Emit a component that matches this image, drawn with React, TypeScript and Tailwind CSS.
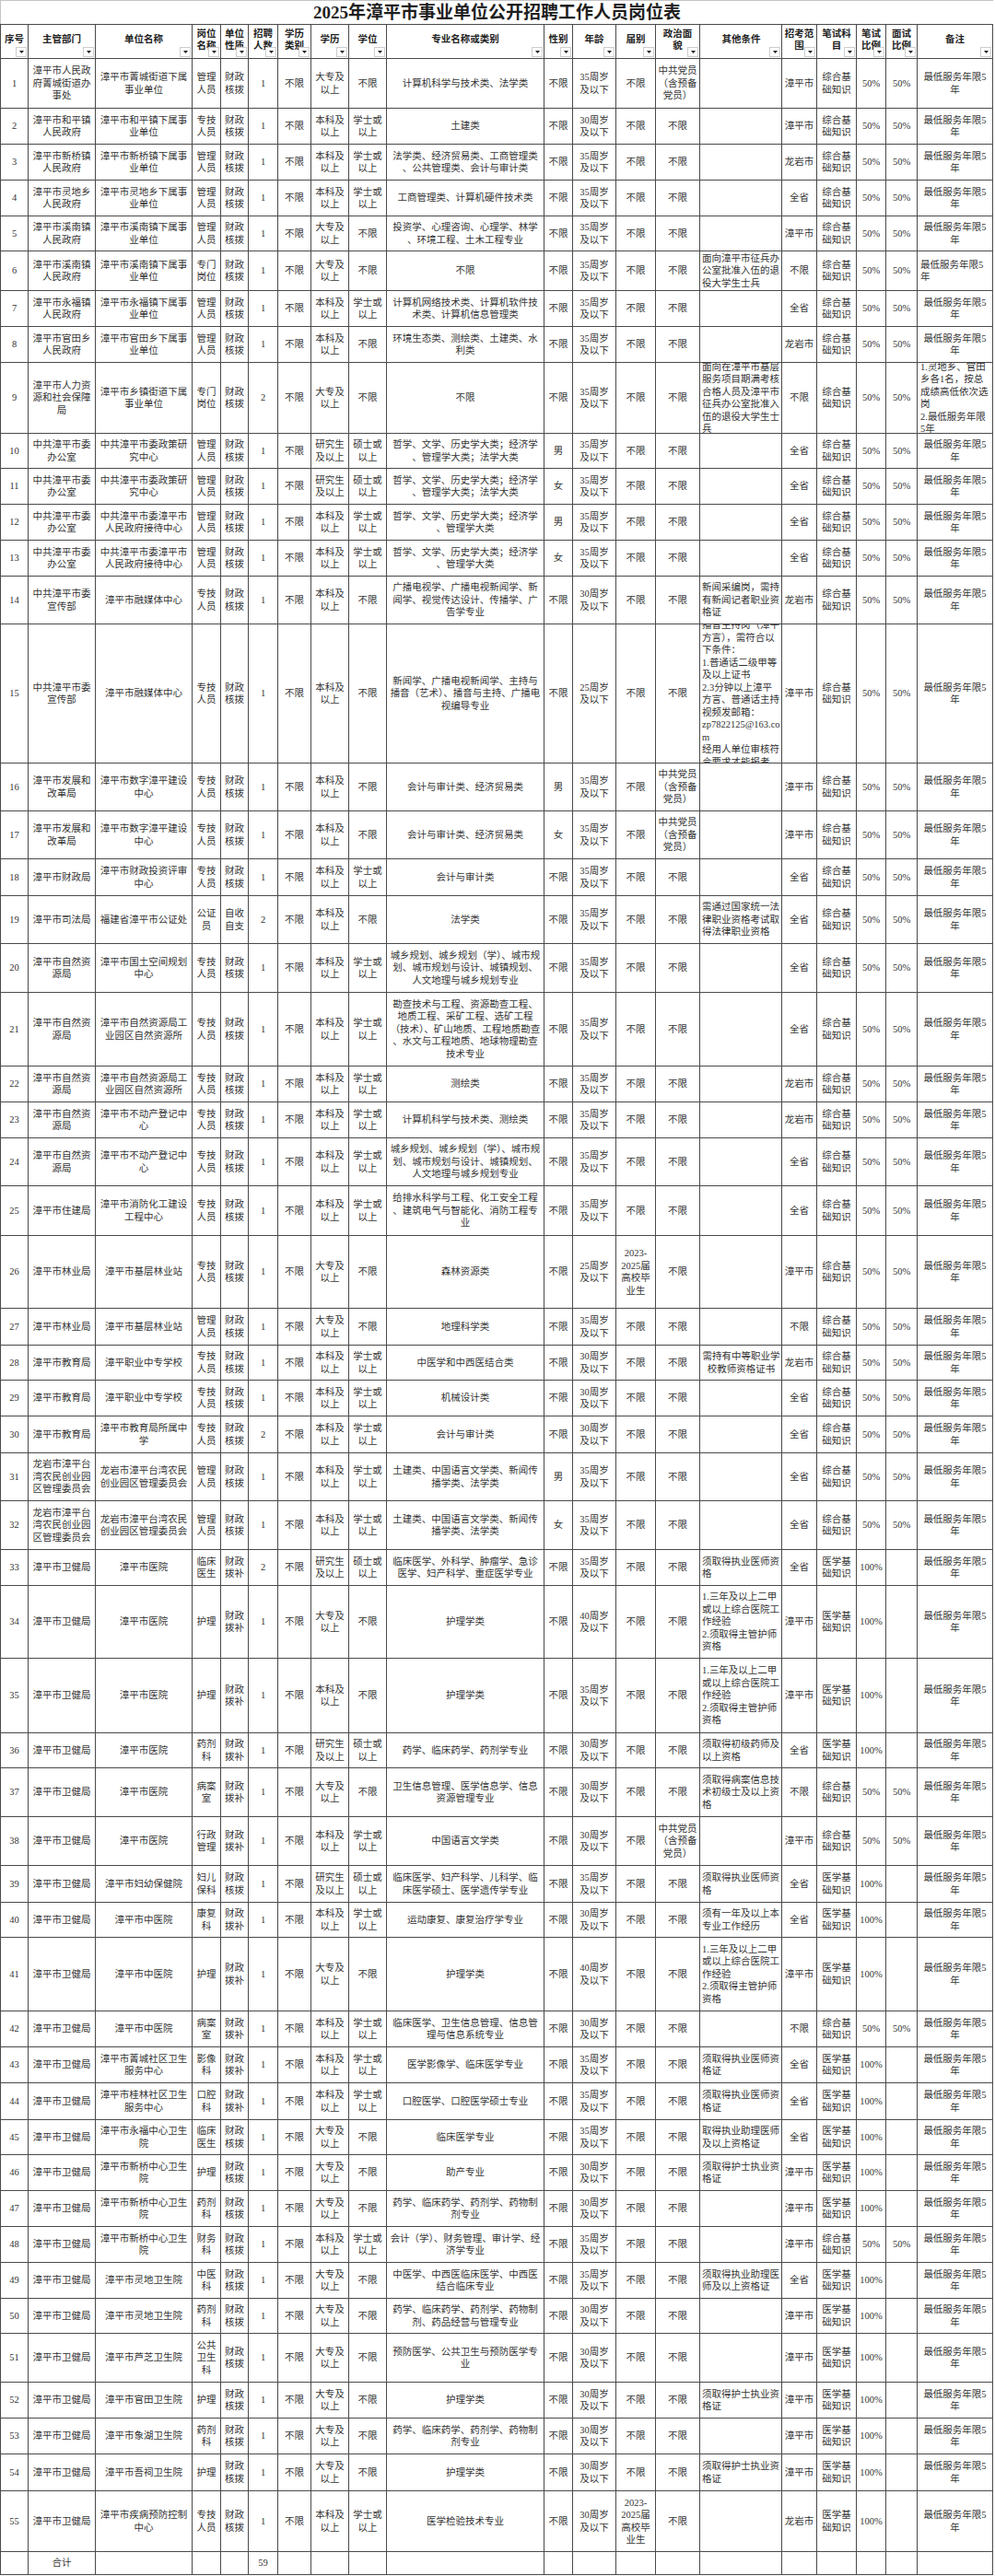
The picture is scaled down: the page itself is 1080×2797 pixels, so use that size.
import clsx from "clsx";

type Row = {
  h: string;
  v: string[];
  oc?: boolean; // other-conditions centred
  nl?: boolean; // note left aligned
};

const GL = "管理人员";
const ZJ = "专技人员";
const HB = "财政核拨";
const BB = "财政拨补";
const DZ = "大专及以上";
const BK = "本科及以上";
const YJ = "研究生及以上";
const XS = "学士或以上";
const SS = "硕士或以上";
const BX = "不限";
const DY = "中共党员\n（含预备\n党员）";
const ZH = "综合基础知识";
const YX = "医学基础知识";
const P = "50%";
const NOTE = "最低服务年限5年";
const GRAD = "2023-\n2025届\n高校毕\n业生";
const WJ = "漳平市卫健局";
const LY = "龙岩市漳平台湾农民创业园区管理委员会";
const URBAN =
  "城乡规划、城乡规划（学）、城市规划、城市规划与设计、城镇规划、人文地理与城乡规划专业";
const NURSE = "1.三年及以上二甲或以上综合医院工作经验\n2.须取得主管护师资格";

const COLS = [
  { head: "序号", cls: "px-[1px]" },
  { head: "主管部门", cls: "px-[1px]" },
  { head: "单位名称", cls: "px-[1px]" },
  { head: "岗位\n名称", cls: "px-[1px]" },
  { head: "单位\n性质", cls: "px-[1px]" },
  { head: "招聘\n人数", cls: "px-[1px]" },
  { head: "学历\n类别", cls: "px-[1px]" },
  { head: "学历", cls: "px-[1px]" },
  { head: "学位", cls: "px-[1px]" },
  { head: "专业名称或类别", cls: "px-[3px] [line-break:anywhere]" },
  { head: "性别", cls: "px-[1px]" },
  { head: "年龄", cls: "px-[1px]" },
  { head: "届别", cls: "px-[1px]" },
  { head: "政治面\n貌", cls: "px-[1px]" },
  { head: "其他条件", cls: "pl-[2px] pr-[1px] break-all" },
  { head: "招考范\n围", cls: "px-[1px]" },
  { head: "笔试科\n目", cls: "px-[1px]" },
  { head: "笔试\n比例", cls: "px-[1px]" },
  { head: "面试\n比例", cls: "px-[1px]" },
  { head: "备注", cls: "px-[3px]" },
];

// dept, unit, post, fund, count, edu, degree, major, sex, age, grad, politics, other, scope, subject, written, interview, note
const ROWS: Row[] = [
  { h: "h-[54px]", v: ["漳平市人民政府菁城街道办事处", "漳平市菁城街道下属事业单位", GL, HB, "1", DZ, BX, "计算机科学与技术类、法学类", BX, "35", BX, DY, "", "漳平市", ZH, P, P, NOTE] },
  { h: "h-[39px]", v: ["漳平市和平镇人民政府", "漳平市和平镇下属事业单位", ZJ, HB, "1", BK, XS, "土建类", BX, "30", BX, BX, "", "漳平市", ZH, P, P, NOTE] },
  { h: "h-[39px]", v: ["漳平市新桥镇人民政府", "漳平市新桥镇下属事业单位", GL, HB, "1", BK, XS, "法学类、经济贸易类、工商管理类、公共管理类、会计与审计类", BX, "35", BX, BX, "", "龙岩市", ZH, P, P, NOTE] },
  { h: "h-[39px]", v: ["漳平市灵地乡人民政府", "漳平市灵地乡下属事业单位", GL, HB, "1", BK, XS, "工商管理类、计算机硬件技术类", BX, "35", BX, BX, "", "全省", ZH, P, P, NOTE] },
  { h: "h-[38px]", v: ["漳平市溪南镇人民政府", "漳平市溪南镇下属事业单位", GL, HB, "1", DZ, BX, "投资学、心理咨询、心理学、林学、环境工程、土木工程专业", BX, "35", BX, BX, "", "漳平市", ZH, P, P, NOTE] },
  { h: "h-[43px]", nl: true, v: ["漳平市溪南镇人民政府", "漳平市溪南镇下属事业单位", "专门岗位", HB, "1", DZ, BX, BX, BX, "35", BX, BX, "面向漳平市征兵办公室批准入伍的退役大学生士兵", BX, ZH, P, P, NOTE] },
  { h: "h-[39px]", v: ["漳平市永福镇人民政府", "漳平市永福镇下属事业单位", GL, HB, "1", BK, XS, "计算机网络技术类、计算机软件技术类、计算机信息管理类", BX, "35", BX, BX, "", "全省", ZH, P, P, NOTE] },
  { h: "h-[39px]", v: ["漳平市官田乡人民政府", "漳平市官田乡下属事业单位", GL, HB, "1", BK, BX, "环境生态类、测绘类、土建类、水利类", BX, "35", BX, BX, "", "龙岩市", ZH, P, P, NOTE] },
  { h: "h-[77px]", nl: true, v: ["漳平市人力资源和社会保障局", "漳平市乡镇街道下属事业单位", "专门岗位", HB, "2", DZ, BX, BX, BX, "35", BX, BX, "面向在漳平市基层服务项目期满考核合格人员及漳平市征兵办公室批准入伍的退役大学生士兵", BX, ZH, P, P, "1.灵地乡、官田乡各1名，按总成绩高低依次选岗\n2.最低服务年限5年"] },
  { h: "h-[38px]", v: ["中共漳平市委办公室", "中共漳平市委政策研究中心", GL, HB, "1", YJ, SS, "哲学、文学、历史学大类；经济学、管理学大类；法学大类", "男", "35", BX, BX, "", "全省", ZH, P, P, NOTE] },
  { h: "h-[39px]", v: ["中共漳平市委办公室", "中共漳平市委政策研究中心", GL, HB, "1", YJ, SS, "哲学、文学、历史学大类；经济学、管理学大类；法学大类", "女", "35", BX, BX, "", "全省", ZH, P, P, NOTE] },
  { h: "h-[39px]", v: ["中共漳平市委办公室", "中共漳平市委漳平市人民政府接待中心", GL, HB, "1", BK, XS, "哲学、文学、历史学大类；经济学、管理学大类", "男", "35", BX, BX, "", "全省", ZH, P, P, NOTE] },
  { h: "h-[39px]", v: ["中共漳平市委办公室", "中共漳平市委漳平市人民政府接待中心", GL, HB, "1", BK, XS, "哲学、文学、历史学大类；经济学、管理学大类", "女", "35", BX, BX, "", "全省", ZH, P, P, NOTE] },
  { h: "h-[52px]", v: ["中共漳平市委宣传部", "漳平市融媒体中心", ZJ, HB, "1", BK, BX, "广播电视学、广播电视新闻学、新闻学、视觉传达设计、传播学、广告学专业", BX, "30", BX, BX, "新闻采编岗，需持有新闻记者职业资格证", "龙岩市", ZH, P, P, NOTE] },
  { h: "h-[151px]", v: ["中共漳平市委宣传部", "漳平市融媒体中心", ZJ, HB, "1", BK, BX, "新闻学、广播电视新闻学、主持与播音（艺术）、播音与主持、广播电视编导专业", BX, "25", BX, BX, "播音主持岗（漳平方言），需符合以下条件：\n1.普通话二级甲等及以上证书\n2.3分钟以上漳平方言、普通话主持视频发邮箱：\nzp7822125@163.com\n经用人单位审核符合要求才能报考", "漳平市", ZH, P, P, NOTE] },
  { h: "h-[52px]", v: ["漳平市发展和改革局", "漳平市数字漳平建设中心", ZJ, HB, "1", BK, BX, "会计与审计类、经济贸易类", "男", "35", BX, DY, "", "漳平市", ZH, P, P, NOTE] },
  { h: "h-[52px]", v: ["漳平市发展和改革局", "漳平市数字漳平建设中心", ZJ, HB, "1", BK, BX, "会计与审计类、经济贸易类", "女", "35", BX, DY, "", "漳平市", ZH, P, P, NOTE] },
  { h: "h-[40px]", v: ["漳平市财政局", "漳平市财政投资评审中心", ZJ, HB, "1", BK, XS, "会计与审计类", BX, "35", BX, BX, "", "全省", ZH, P, P, NOTE] },
  { h: "h-[52px]", v: ["漳平市司法局", "福建省漳平市公证处", "公证员", "自收自支", "2", BK, BX, "法学类", BX, "35", BX, BX, "需通过国家统一法律职业资格考试取得法律职业资格", "全省", ZH, P, P, NOTE] },
  { h: "h-[53px]", v: ["漳平市自然资源局", "漳平市国土空间规划中心", ZJ, HB, "1", BK, XS, URBAN, BX, "35", BX, BX, "", "全省", ZH, P, P, NOTE] },
  { h: "h-[80px]", v: ["漳平市自然资源局", "漳平市自然资源局工业园区自然资源所", ZJ, HB, "1", BK, XS, "勘查技术与工程、资源勘查工程、地质工程、采矿工程、选矿工程\n（技术）、矿山地质、工程地质勘查、水文与工程地质、地球物理勘查技术专业", BX, "35", BX, BX, "", "全省", ZH, P, P, NOTE] },
  { h: "h-[39px]", v: ["漳平市自然资源局", "漳平市自然资源局工业园区自然资源所", ZJ, HB, "1", BK, XS, "测绘类", BX, "35", BX, BX, "", "龙岩市", ZH, P, P, NOTE] },
  { h: "h-[39px]", v: ["漳平市自然资源局", "漳平市不动产登记中心", ZJ, HB, "1", BK, XS, "计算机科学与技术类、测绘类", BX, "35", BX, BX, "", "龙岩市", ZH, P, P, NOTE] },
  { h: "h-[52px]", v: ["漳平市自然资源局", "漳平市不动产登记中心", ZJ, HB, "1", BK, XS, URBAN, BX, "35", BX, BX, "", "全省", ZH, P, P, NOTE] },
  { h: "h-[54px]", v: ["漳平市住建局", "漳平市消防化工建设工程中心", ZJ, HB, "1", BK, XS, "给排水科学与工程、化工安全工程、建筑电气与智能化、消防工程专业", BX, "35", BX, BX, "", "全省", ZH, P, P, NOTE] },
  { h: "h-[79px]", v: ["漳平市林业局", "漳平市基层林业站", ZJ, HB, "1", DZ, BX, "森林资源类", BX, "25", GRAD, BX, "", "漳平市", ZH, P, P, NOTE] },
  { h: "h-[40px]", v: ["漳平市林业局", "漳平市基层林业站", GL, HB, "1", DZ, BX, "地理科学类", BX, "35", BX, BX, "", BX, ZH, P, P, NOTE] },
  { h: "h-[38px]", oc: true, v: ["漳平市教育局", "漳平职业中专学校", ZJ, HB, "1", BK, XS, "中医学和中西医结合类", BX, "30", BX, BX, "需持有中等职业学校教师资格证书", "龙岩市", ZH, P, P, NOTE] },
  { h: "h-[39px]", v: ["漳平市教育局", "漳平职业中专学校", ZJ, HB, "1", BK, XS, "机械设计类", BX, "30", BX, BX, "", "全省", ZH, P, P, NOTE] },
  { h: "h-[40px]", v: ["漳平市教育局", "漳平市教育局所属中学", ZJ, HB, "2", BK, XS, "会计与审计类", BX, "30", BX, BX, "", "全省", ZH, P, P, NOTE] },
  { h: "h-[52px]", v: [LY, LY, GL, HB, "1", BK, XS, "土建类、中国语言文学类、新闻传播学类、法学类", "男", "35", BX, BX, "", "全省", ZH, P, P, NOTE] },
  { h: "h-[53px]", v: [LY, LY, GL, HB, "1", BK, XS, "土建类、中国语言文学类、新闻传播学类、法学类", "女", "35", BX, BX, "", "全省", ZH, P, P, NOTE] },
  { h: "h-[39px]", v: [WJ, "漳平市医院", "临床医生", BB, "2", YJ, SS, "临床医学、外科学、肿瘤学、急诊医学、妇产科学、重症医学专业", BX, "35", BX, BX, "须取得执业医师资格", "全省", YX, "100%", "", NOTE] },
  { h: "h-[79px]", v: [WJ, "漳平市医院", "护理", BB, "1", DZ, BX, "护理学类", BX, "40", BX, BX, NURSE, "漳平市", YX, "100%", "", NOTE] },
  { h: "h-[81px]", v: [WJ, "漳平市医院", "护理", BB, "1", BK, BX, "护理学类", BX, "35", BX, BX, NURSE, "漳平市", YX, "100%", "", NOTE] },
  { h: "h-[38px]", v: [WJ, "漳平市医院", "药剂科", BB, "1", YJ, SS, "药学、临床药学、药剂学专业", BX, "30", BX, BX, "须取得初级药师及以上资格", "全省", YX, "100%", "", NOTE] },
  { h: "h-[53px]", v: [WJ, "漳平市医院", "病案室", BB, "1", DZ, BX, "卫生信息管理、医学信息学、信息资源管理专业", BX, "30", BX, BX, "须取得病案信息技术初级士及以上资格", BX, ZH, P, P, NOTE] },
  { h: "h-[53px]", v: [WJ, "漳平市医院", "行政管理", BB, "1", BK, XS, "中国语言文学类", BX, "30", BX, DY, "", "漳平市", ZH, P, P, NOTE] },
  { h: "h-[40px]", v: [WJ, "漳平市妇幼保健院", "妇儿保科", HB, "1", YJ, SS, "临床医学、妇产科学、儿科学、临床医学硕士、医学遗传学专业", BX, "35", BX, BX, "须取得执业医师资格", "全省", YX, "100%", "", NOTE] },
  { h: "h-[38px]", v: [WJ, "漳平市中医院", "康复科", BB, "1", BK, XS, "运动康复、康复治疗学专业", BX, "30", BX, BX, "须有一年及以上本专业工作经历", "全省", YX, "100%", "", NOTE] },
  { h: "h-[80px]", v: [WJ, "漳平市中医院", "护理", BB, "1", DZ, BX, "护理学类", BX, "40", BX, BX, NURSE, "漳平市", YX, "100%", "", NOTE] },
  { h: "h-[39px]", v: [WJ, "漳平市中医院", "病案室", BB, "1", BK, XS, "临床医学、卫生信息管理、信息管理与信息系统专业", BX, "30", BX, BX, "", BX, ZH, P, P, NOTE] },
  { h: "h-[39px]", v: [WJ, "漳平市菁城社区卫生服务中心", "影像科", BB, "1", BK, XS, "医学影像学、临床医学专业", BX, "35", BX, BX, "须取得执业医师资格证", "全省", YX, "100%", "", NOTE] },
  { h: "h-[40px]", v: [WJ, "漳平市桂林社区卫生服务中心", "口腔科", BB, "1", BK, XS, "口腔医学、口腔医学硕士专业", BX, "35", BX, BX, "须取得执业医师资格证", "全省", YX, "100%", "", NOTE] },
  { h: "h-[38px]", v: [WJ, "漳平市永福中心卫生院", "临床医生", HB, "1", DZ, BX, "临床医学专业", BX, "35", BX, BX, "取得执业助理医师及以上资格证", "全省", YX, "100%", "", NOTE] },
  { h: "h-[39px]", v: [WJ, "漳平市新桥中心卫生院", "护理", HB, "1", DZ, BX, "助产专业", BX, "30", BX, BX, "须取得护士执业资格证", "漳平市", YX, "100%", "", NOTE] },
  { h: "h-[39px]", v: [WJ, "漳平市新桥中心卫生院", "药剂科", HB, "1", DZ, BX, "药学、临床药学、药剂学、药物制剂专业", BX, "30", BX, BX, "", "漳平市", YX, "100%", "", NOTE] },
  { h: "h-[39px]", v: [WJ, "漳平市新桥中心卫生院", "财务科", HB, "1", BK, XS, "会计（学）、财务管理、审计学、经济学专业", BX, "35", BX, BX, "", "漳平市", ZH, P, P, NOTE] },
  { h: "h-[39px]", v: [WJ, "漳平市灵地卫生院", "中医科", HB, "1", DZ, BX, "中医学、中西医临床医学、中西医结合临床专业", BX, "35", BX, BX, "须取得执业助理医师及以上资格证", "全省", YX, "100%", "", NOTE] },
  { h: "h-[38px]", v: [WJ, "漳平市灵地卫生院", "药剂科", HB, "1", DZ, BX, "药学、临床药学、药剂学、药物制剂、药品经营与管理专业", BX, "30", BX, BX, "", "漳平市", YX, "100%", "", NOTE] },
  { h: "h-[53px]", v: [WJ, "漳平市芦芝卫生院", "公共卫生科", HB, "1", DZ, BX, "预防医学、公共卫生与预防医学专业", BX, "30", BX, BX, "", "漳平市", YX, "100%", "", NOTE] },
  { h: "h-[39px]", v: [WJ, "漳平市官田卫生院", "护理", HB, "1", DZ, BX, "护理学类", BX, "30", BX, BX, "须取得护士执业资格证", "漳平市", YX, "100%", "", NOTE] },
  { h: "h-[39px]", v: [WJ, "漳平市象湖卫生院", "药剂科", HB, "1", DZ, BX, "药学、临床药学、药剂学、药物制剂专业", BX, "30", BX, BX, "", "漳平市", YX, "100%", "", NOTE] },
  { h: "h-[40px]", v: [WJ, "漳平市吾祠卫生院", "护理", HB, "1", DZ, BX, "护理学类", BX, "30", BX, BX, "须取得护士执业资格证", "漳平市", YX, "100%", "", NOTE] },
  { h: "h-[66px]", v: [WJ, "漳平市疾病预防控制中心", ZJ, HB, "1", BK, XS, "医学检验技术专业", BX, "30", GRAD, BX, "", "龙岩市", YX, "100%", "", NOTE] },
];

const cellBase =
  "flex items-center overflow-hidden border-r border-b border-[#4a4a4a] whitespace-pre-line";

const FilterButton = () => (
  <span className="absolute right-[1px] bottom-[1px] flex h-[11px] w-[12px] items-center justify-center border border-[#cdcdcd] bg-white">
    <svg width="5" height="3" viewBox="0 0 5 3">
      <path d="M0 0h5L2.5 3z" fill="#222" />
    </svg>
  </span>
);

const cellsFor = (row: Row, i: number) => {
  const [dept, unit, post, fund, count, edu, deg, major, sex, age, grad, pol, other, scope, subj, w, m, note] = row.v;
  return [
    String(i + 1), dept, unit, post, fund, count, "不限", edu, deg, major, sex,
    `${age}周岁\n及以下`, grad, pol, other, scope, subj, w, m, note,
  ];
};

export default function App() {
  return (
    <div className="w-[1080px] bg-white font-['Liberation_Serif','Noto_Sans_CJK_SC',serif] text-[10.5px] leading-[13.5px] text-[#333]">
      <div className="flex h-[26px] w-[1078px] items-center justify-center border-l border-t border-[#c4c4c4] text-[19px] font-bold leading-none text-[#1e1e1e]">
        2025年漳平市事业单位公开招聘工作人员岗位表
      </div>

      <div className="grid w-[1078px] grid-cols-[30px_73px_105px_31px_30px_32px_36px_41px_41px_171px_31px_47px_43px_48px_89px_38px_43px_32px_34px_82px] border-l border-t border-[#4a4a4a]">
        {COLS.map((c) => (
          <div key={c.head} className={clsx(cellBase, "relative h-[37px] font-bold text-[#222]", c.cls)}>
            <div className="w-full pb-[4px] text-center">{c.head}</div>
            <FilterButton />
          </div>
        ))}

        {ROWS.map((row, i) =>
          cellsFor(row, i).map((text, j) => {
            const left = (j === 14 && !row.oc) || (j === 19 && row.nl);
            return (
              <div key={`${i}-${j}`} className={clsx(cellBase, row.h, COLS[j].cls)}>
                <div className={clsx("w-full", left ? "text-left" : "text-center")}>{text}</div>
              </div>
            );
          })
        )}

        {COLS.map((c, j) => (
          <div key={`total-${j}`} className={clsx(cellBase, "h-[25px]", c.cls)}>
            <div className="w-full text-center">{j === 1 ? "合计" : j === 5 ? "59" : ""}</div>
          </div>
        ))}
      </div>
    </div>
  );
}
